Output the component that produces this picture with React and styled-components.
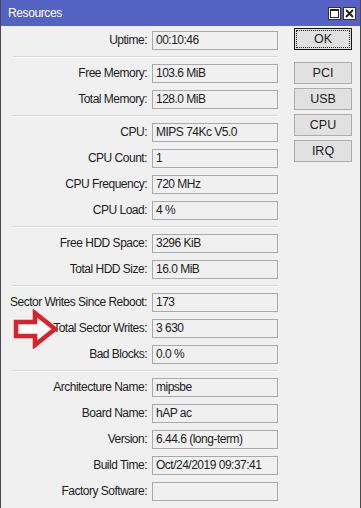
import React from 'react';
import styled, { createGlobalStyle } from 'styled-components';

const Global = createGlobalStyle`
  html, body { margin: 0; padding: 0; background: #f0f0f0; }
  body { font-family: "Liberation Sans", Arial, sans-serif; }
`

const Window = styled.div`
  position: relative;
  width: 361px;
  height: 508px;
  box-sizing: border-box;
  background: #f0f0f0;
  border-left: 1px solid #4a4a4a;
  border-right: 1px solid #4a4a4a;
  overflow: hidden;
`

const TitleBar = styled.div`
  height: 26px;
  background: #5462c4;
  display: flex;
  align-items: center;
  justify-content: space-between;
  padding: 0 4px 0 7px;
  color: #fff;
  font-size: 12px;
  letter-spacing: -0.4px;
`

const TitleButtons = styled.div`
  display: flex;
  gap: 2px;
`

const TitleButton = styled.div`
  width: 13px;
  height: 13px;
  box-sizing: border-box;
  background: #fff;
  border: 1px solid #333;
  display: flex;
  align-items: center;
  justify-content: center;
`

const Body = styled.div`
  display: grid;
  grid-template-columns: 293px 58px;
  padding-top: 1px;
`

const Main = styled.div`
  display: flex;
  flex-direction: column;
`

const Row = styled.div`
  display: grid;
  grid-template-columns: 146px 126px;
  column-gap: 5px;
  height: 26px;
  align-items: center;
  font-size: 12px;
  letter-spacing: -0.5px;
  color: #1c1c1c;
`

const Label = styled.div`
  text-align: right;
  white-space: nowrap;
`

const Field = styled.div`
  height: 19px;
  box-sizing: border-box;
  border: 1px solid #a9a9a9;
  padding: 0 3px;
  line-height: 17px;
  white-space: nowrap;
  overflow: hidden;
`

const Separator = styled.div`
  height: 7px;
  display: flex;
  align-items: center;
  padding-left: 12px;
  width: 277px;
  box-sizing: border-box;

  &::after {
    content: "";
    flex: 1;
    height: 1px;
    background: #dadada;
    box-shadow: 0 1px 0 #fafafa;
  }
`

const Side = styled.div`
  display: flex;
  flex-direction: column;
  gap: 4px;
  padding-top: 1px;
`

const Button = styled.div`
  height: 22px;
  box-sizing: border-box;
  border: 1px solid ${p => (p.$default ? '#111' : '#adadad')};
  background: #e1e1e1;
  display: flex;
  align-items: center;
  justify-content: center;
  font-size: 12.5px;
  color: #1c1c1c;
  margin-bottom: ${p => (p.$default ? '8px' : '0')};
  position: relative;

  &::before {
    content: "";
    display: ${p => (p.$default ? 'block' : 'none')};
    position: absolute;
    inset: 1px;
    border: 1px dotted #222;
  }
`

const Arrow = styled.svg`
  position: absolute;
  left: 11px;
  top: 309px;
`

const groups = [
  [['Uptime', '00:10:46']],
  [['Free Memory', '103.6 MiB'], ['Total Memory', '128.0 MiB']],
  [['CPU', 'MIPS 74Kc V5.0'], ['CPU Count', '1'], ['CPU Frequency', '720 MHz'], ['CPU Load', '4 %']],
  [['Free HDD Space', '3296 KiB'], ['Total HDD Size', '16.0 MiB']],
  [['Sector Writes Since Reboot', '173'], ['Total Sector Writes', '3 630'], ['Bad Blocks', '0.0 %']],
  [['Architecture Name', 'mipsbe'], ['Board Name', 'hAP ac'], ['Version', '6.44.6 (long-term)'], ['Build Time', 'Oct/24/2019 09:37:41'], ['Factory Software', '']],
]

export default function App() {
  return (
    <Window>
      <Global />
      <TitleBar>
        <span>Resources</span>
        <TitleButtons>
          <TitleButton>
            <svg width="9" height="9" viewBox="0 0 9 9">
              <rect x="0.5" y="0.5" width="8" height="8" fill="none" stroke="#222" />
              <line x1="0" y1="1.5" x2="9" y2="1.5" stroke="#222" />
            </svg>
          </TitleButton>
          <TitleButton>
            <svg width="9" height="9" viewBox="0 0 9 9">
              <path d="M1 1 L8 8 M8 1 L1 8" stroke="#222" strokeWidth="2" />
            </svg>
          </TitleButton>
        </TitleButtons>
      </TitleBar>
      <Body>
        <Main>
          {groups.map((g, i) => (
            <React.Fragment key={i}>
              {i > 0 && <Separator />}
              {g.map(([label, value]) => (
                <Row key={label}>
                  <Label>{label}:</Label>
                  <Field>{value}</Field>
                </Row>
              ))}
            </React.Fragment>
          ))}
        </Main>
        <Side>
          <Button $default>OK</Button>
          <Button>PCI</Button>
          <Button>USB</Button>
          <Button>CPU</Button>
          <Button>IRQ</Button>
        </Side>
      </Body>
      <Arrow width="48" height="40" viewBox="0 0 48 40">
        <polygon points="4,13 23,13 23,4 43,20 23,36 23,27 4,27" fill="#fff" stroke="#d9232b" strokeWidth="4.5" strokeLinejoin="miter" />
      </Arrow>
    </Window>
  );
}
